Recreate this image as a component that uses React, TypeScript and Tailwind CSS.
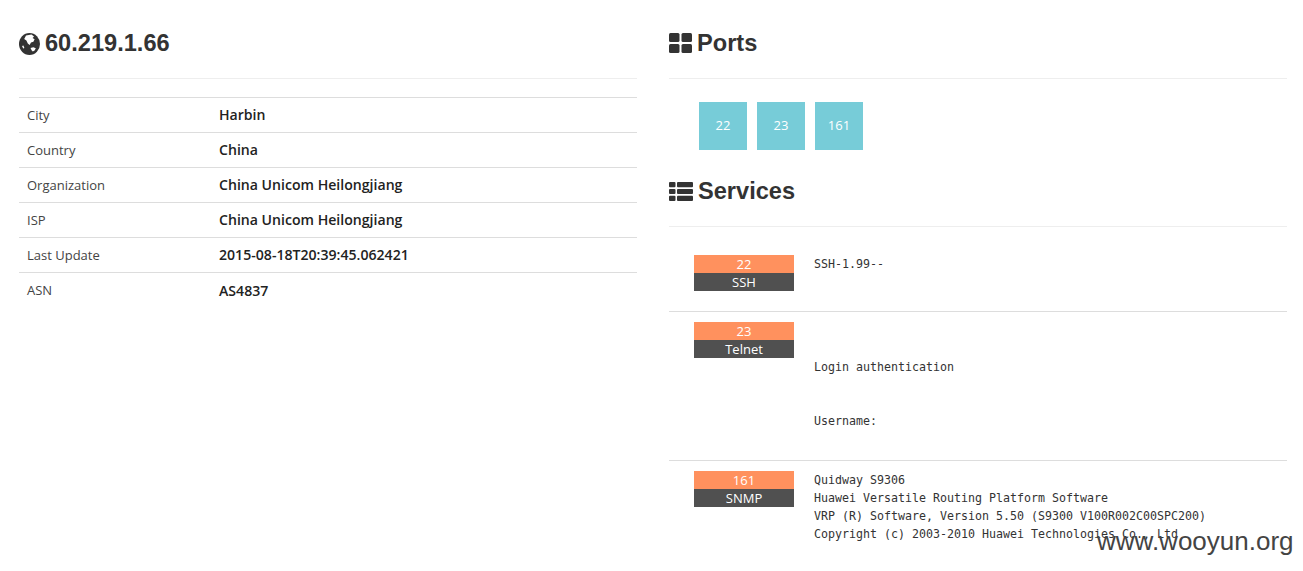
const info = [
  { label: 'City', value: 'Harbin' },
  { label: 'Country', value: 'China' },
  { label: 'Organization', value: 'China Unicom Heilongjiang' },
  { label: 'ISP', value: 'China Unicom Heilongjiang' },
  { label: 'Last Update', value: '2015-08-18T20:39:45.062421' },
  { label: 'ASN', value: 'AS4837' },
]

const ports = ['22', '23', '161']

const services = [
  { port: '22', name: 'SSH', banner: 'SSH-1.99--', height: 'h-[57px]' },
  { port: '23', name: 'Telnet', banner: '\n\nLogin authentication\n\n\nUsername:', height: 'h-[139px]' },
  {
    port: '161',
    name: 'SNMP',
    banner:
      'Quidway S9306\nHuawei Versatile Routing Platform Software\nVRP (R) Software, Version 5.50 (S9300 V100R002C00SPC200)\nCopyright (c) 2003-2010 Huawei Technologies Co., Ltd',
    height: 'h-[90px]',
  },
]

function GlobeIcon() {
  return (
    <svg viewBox="0 0 21 22" className="mt-[2px] mr-[5px] h-[22px] w-[21px]" fill="currentColor">
      <ellipse cx="10.5" cy="11" rx="10.5" ry="11" />
      <path
        fill="#ffffff"
        d="M7 2.5 L12.5 1.6 L15 3.4 L13.6 5 L15.6 6.2 L14.4 8.8 L12 9.4 L10.6 12 L8.8 10.4 L7.4 7.4 L5.2 6 Z"
      />
      <path fill="#ffffff" d="M11.5 15 L14.4 14.2 L16.8 15.2 L15.6 17.6 L13.8 18.6 L12.6 17.2 Z" />
      <path fill="#ffffff" d="M3 13 L4.4 12.6 L5.4 15 L4.2 15.6 Z" />
    </svg>
  )
}

function GridIcon() {
  return (
    <svg viewBox="0 0 23 20" className="mr-[5px] h-[20px] w-[23px]" fill="currentColor">
      <rect x="0" y="0" width="10.5" height="9" rx="1.5" />
      <rect x="12.5" y="0" width="10.5" height="9" rx="1.5" />
      <rect x="0" y="11" width="10.5" height="9" rx="1.5" />
      <rect x="12.5" y="11" width="10.5" height="9" rx="1.5" />
    </svg>
  )
}

function ListIcon() {
  return (
    <svg viewBox="0 0 24 19" className="mr-[5px] h-[19px] w-[24px]" fill="currentColor">
      <rect x="0" y="0" width="6.5" height="5.2" rx="1" />
      <rect x="8" y="0" width="16" height="5.2" rx="1" />
      <rect x="0" y="6.9" width="6.5" height="5.2" rx="1" />
      <rect x="8" y="6.9" width="16" height="5.2" rx="1" />
      <rect x="0" y="13.8" width="6.5" height="5.2" rx="1" />
      <rect x="8" y="13.8" width="16" height="5.2" rx="1" />
    </svg>
  )
}

function Heading({ icon, title }: { icon: React.ReactNode; title: string }) {
  return (
    <div className="h-[51px] border-b border-[#eeeeee]">
      <h2 className="flex h-[30px] items-center font-['Liberation_Sans',Arial,sans-serif] text-[23.6px] leading-[30px] font-bold text-[#333333]">
        {icon}
        {title}
      </h2>
    </div>
  )
}

export default function App() {
  return (
    <div className="relative h-[571px] overflow-hidden bg-white font-['Open_Sans',sans-serif] text-[13px] text-[#333333]">
      <div className="flex gap-[32px] pt-[28px] pr-[16px] pl-[19px]">
        <section className="w-[618px]">
          <Heading icon={<GlobeIcon />} title="60.219.1.66" />
          <table className="mt-[18px] w-full border-t border-[#dddddd]">
            <tbody>
              {info.map((row) => (
                <tr key={row.label} className="h-[35px] border-b border-[#dddddd] last:border-b-0">
                  <td className="w-[200px] pt-px pl-[8px] text-[#444444]">{row.label}</td>
                  <td className="text-[14.1px] font-semibold text-[#222222]">{row.value}</td>
                </tr>
              ))}
            </tbody>
          </table>
        </section>

        <section className="w-[618px]">
          <Heading icon={<GridIcon />} title="Ports" />
          <div className="mt-[23px] ml-[30px] flex gap-[10px]">
            {ports.map((port) => (
              <div key={port} className="flex h-[48px] w-[48px] items-center justify-center bg-[#77ccd8] text-white">
                {port}
              </div>
            ))}
          </div>
          <div className="mt-[26px]">
            <Heading icon={<ListIcon />} title="Services" />
          </div>
          <div className="mt-[28px]">
            {services.map((service) => (
              <div key={service.port} className={`${service.height} mb-[10px] flex border-b border-[#dddddd] pl-[25px] last:border-b-0`}>
                <div className="w-[100px] shrink-0 text-center text-[13px] leading-[18px] text-white">
                  <div className="bg-[#ff915e]">{service.port}</div>
                  <div className="bg-[#505050]">{service.name}</div>
                </div>
                <pre className="ml-[20px] font-['DejaVu_Sans_Mono',monospace] text-[11.63px] leading-[18px] text-[#333333]">
                  {service.banner}
                </pre>
              </div>
            ))}
          </div>
        </section>
      </div>
      <div className="absolute top-[523px] left-[1097px] font-['Liberation_Sans',Arial,sans-serif] text-[26px] leading-[36px] text-[#444444]">
        www.wooyun.org
      </div>
    </div>
  )
}
